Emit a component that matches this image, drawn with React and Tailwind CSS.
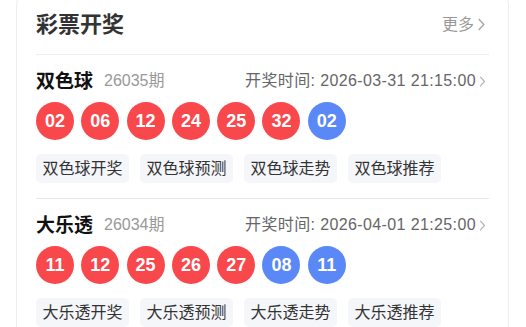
import React from "react";

const FONT = { fontFamily: '"Liberation Sans", "Noto Sans CJK SC", sans-serif' };

function Chevron({ className }) {
  return (
    <svg viewBox="0 0 8 14" className={className} fill="none" stroke="currentColor" strokeWidth="1.6" strokeLinecap="round" strokeLinejoin="round">
      <path d="M1.5 1.5 L6.5 7 L1.5 12.5" />
    </svg>
  );
}

function Ball({ n, blue }) {
  return (
    <div
      className={
        "w-[38px] h-[38px] rounded-full flex items-center justify-center text-white font-bold text-[18px] " +
        (blue ? "bg-[#5b88f7]" : "bg-[#f9484b]")
      }
    >
      {n}
    </div>
  );
}

function Section({ name, period, time, reds, blues, tags, last }) {
  return (
    <div className={"pt-[14px] " + (last ? "" : "pb-[15px] border-b border-[#e6e6e6]")}>
      <div className="flex items-center h-[24px]">
        <span className="text-[19px] font-bold text-[#111] leading-none">{name}</span>
        <span className="ml-[11px] text-[16px] text-[#999] leading-none">{period}</span>
        <span className="ml-auto text-[16px] text-[#666] leading-none tracking-[0.38px]">{time}</span>
        <Chevron className="ml-[3px] mr-[3px] w-[7px] h-[11px] text-[#b5b5b5]" />
      </div>
      <div className="flex gap-[7.3px] mt-[9px]">
        {reds.map((n, i) => (
          <Ball key={"r" + i} n={n} />
        ))}
        {blues.map((n, i) => (
          <Ball key={"b" + i} n={n} blue />
        ))}
      </div>
      <div className="flex gap-[11px] mt-[14px]">
        {tags.map((t) => (
          <div key={t} className="h-[29px] px-[6.5px] flex items-center rounded-[5px] bg-[#f5f6fa] text-[16px] text-[#333] leading-none">
            {t}
          </div>
        ))}
      </div>
    </div>
  );
}

export default function App() {
  return (
    <div className="w-[526px] h-[327px] overflow-hidden bg-white" style={FONT}>
      <div className="ml-[16px] w-[493px] -mt-[6px] border border-[#eeeeee] rounded-[10px] px-[19px] pb-[20px]">
        <div className="h-[60px] flex items-center border-b border-[#eeeeee]">
          <span className="text-[22px] font-bold text-[#333] leading-none">彩票开奖</span>
          <span className="ml-auto text-[16px] text-[#999] leading-none">更多</span>
          <Chevron className="ml-[3px] mr-[3px] w-[9px] h-[13px] text-[#aaa]" />
        </div>
        <Section
          name="双色球"
          period="26035期"
          time="开奖时间: 2026-03-31 21:15:00"
          reds={["02", "06", "12", "24", "25", "32"]}
          blues={["02"]}
          tags={["双色球开奖", "双色球预测", "双色球走势", "双色球推荐"]}
        />
        <Section
          name="大乐透"
          period="26034期"
          time="开奖时间: 2026-04-01 21:25:00"
          reds={["11", "12", "25", "26", "27"]}
          blues={["08", "11"]}
          tags={["大乐透开奖", "大乐透预测", "大乐透走势", "大乐透推荐"]}
          last
        />
      </div>
    </div>
  );
}
